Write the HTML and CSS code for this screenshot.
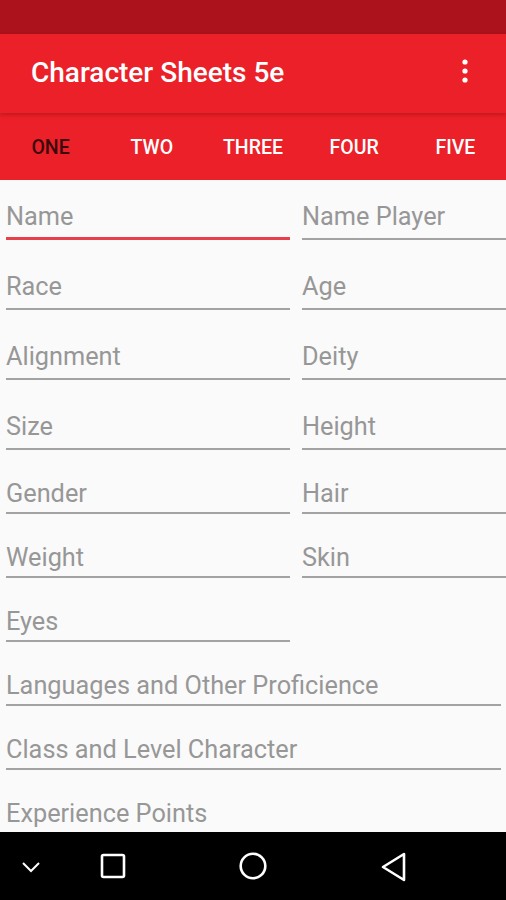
FILE: index.html
```html
<!DOCTYPE html>
<html>
<head>
<meta charset="utf-8">
<link rel="stylesheet" href="styles.css">
</head>
<body>
<div class="screen">
  <div class="statusbar"></div>
  <header class="appbar">
    <div class="title">Character Sheets 5e</div>
    <svg class="menu" width="10" height="26" viewBox="0 0 10 26"><circle cx="5" cy="4" r="2.6" fill="#fff"/><circle cx="5" cy="13" r="2.6" fill="#fff"/><circle cx="5" cy="22" r="2.6" fill="#fff"/></svg>
  </header>
  <nav class="tabs">
    <div class="tab active">ONE</div>
    <div class="tab">TWO</div>
    <div class="tab">THREE</div>
    <div class="tab">FOUR</div>
    <div class="tab">FIVE</div>
  </nav>
  <main class="content">
    <div class="row first">
      <div class="field focus"><span>Name</span></div>
      <div class="field"><span>Name Player</span></div>
    </div>
    <div class="row tall">
      <div class="field"><span>Race</span></div>
      <div class="field"><span>Age</span></div>
    </div>
    <div class="row tall">
      <div class="field"><span>Alignment</span></div>
      <div class="field"><span>Deity</span></div>
    </div>
    <div class="row tall">
      <div class="field"><span>Size</span></div>
      <div class="field"><span>Height</span></div>
    </div>
    <div class="row short">
      <div class="field tight"><span>Gender</span></div>
      <div class="field tight"><span>Hair</span></div>
    </div>
    <div class="row short">
      <div class="field tight"><span>Weight</span></div>
      <div class="field tight"><span>Skin</span></div>
    </div>
    <div class="row short">
      <div class="field tight"><span>Eyes</span></div>
    </div>
    <div class="row short">
      <div class="field tight wide"><span>Languages and Other Proficience</span></div>
    </div>
    <div class="row short">
      <div class="field tight wide"><span>Class and Level Character</span></div>
    </div>
    <div class="row short">
      <div class="field tight wide"><span>Experience Points</span></div>
    </div>
  </main>
  <footer class="navbar">
    <svg class="nav-down" width="22" height="14" viewBox="0 0 22 14"><polyline points="3,3 11,11 19,3" fill="none" stroke="#fff" stroke-width="2"/></svg>
    <svg class="nav-square" width="26" height="26" viewBox="0 0 26 26"><rect x="2" y="2" width="22" height="22" rx="1.5" fill="none" stroke="#fff" stroke-width="2.6"/></svg>
    <svg class="nav-circle" width="30" height="30" viewBox="0 0 30 30"><circle cx="15" cy="15" r="12.3" fill="none" stroke="#fff" stroke-width="2.6"/></svg>
    <svg class="nav-back" width="28" height="30" viewBox="0 0 28 30"><polygon points="24,2 24,28 3,15" fill="none" stroke="#fff" stroke-width="2.6" stroke-linejoin="round"/></svg>
  </footer>
</div>
</body>
</html>
```
FILE: styles.css
```css
html, body {
  margin: 0;
  padding: 0;
  background: #fafafa;
}
.screen {
  width: 506px;
  height: 900px;
  overflow: hidden;
  display: flex;
  flex-direction: column;
  font-family: Roboto, "Liberation Sans", sans-serif;
}
.statusbar {
  height: 34px;
  background: #ab121b;
  flex: none;
}
.appbar {
  height: 79px;
  background: #ec2028;
  flex: none;
  display: flex;
  align-items: center;
  justify-content: space-between;
  padding: 0 36px 0 31px;
  box-sizing: border-box;
  position: relative;
  z-index: 2;
  box-shadow: 0 2px 4px rgba(80, 0, 0, 0.28);
}
.title {
  color: #fff;
  font-size: 28px;
  font-weight: 500;
  margin-top: -2px;
}
.menu {
  margin-top: -6px;
}
.tabs {
  height: 67px;
  background: #ec2028;
  flex: none;
  display: grid;
  grid-template-columns: repeat(5, 1fr);
  align-items: center;
}
.tab {
  text-align: center;
  color: #fff;
  font-size: 19.5px;
  font-weight: 500;
  margin-top: 1px;
}
.tab.active {
  color: #3a0b0d;
}
.content {
  height: 652px;
  flex: none;
  overflow: hidden;
  background: #fafafa;
  padding: 0 0 0 6px;
  box-sizing: border-box;
}
.row {
  display: flex;
  gap: 12px;
}
.row.first { padding-top: 22px; }
.row.tall { padding-top: 32px; }
.row.short { padding-top: 29px; }
.field {
  width: 284px;
  flex: none;
  border-bottom: 2px solid #a3a3a3;
  padding-bottom: 6px;
  font-size: 25.3px;
  line-height: 30px;
  color: #979797;
  white-space: nowrap;
}
.field.tight { padding-bottom: 3px; }
.field.focus { border-bottom: 3px solid #e8404b; padding-bottom: 5px; }
.field.wide { width: 495px; }
.navbar {
  height: 68px;
  flex: none;
  background: #000;
  position: relative;
}
.navbar svg {
  position: absolute;
}
.nav-down { left: 20px; top: 28px; }
.nav-square { left: 100px; top: 21px; }
.nav-circle { left: 238px; top: 19px; }
.nav-back { left: 380px; top: 20px; }
```
